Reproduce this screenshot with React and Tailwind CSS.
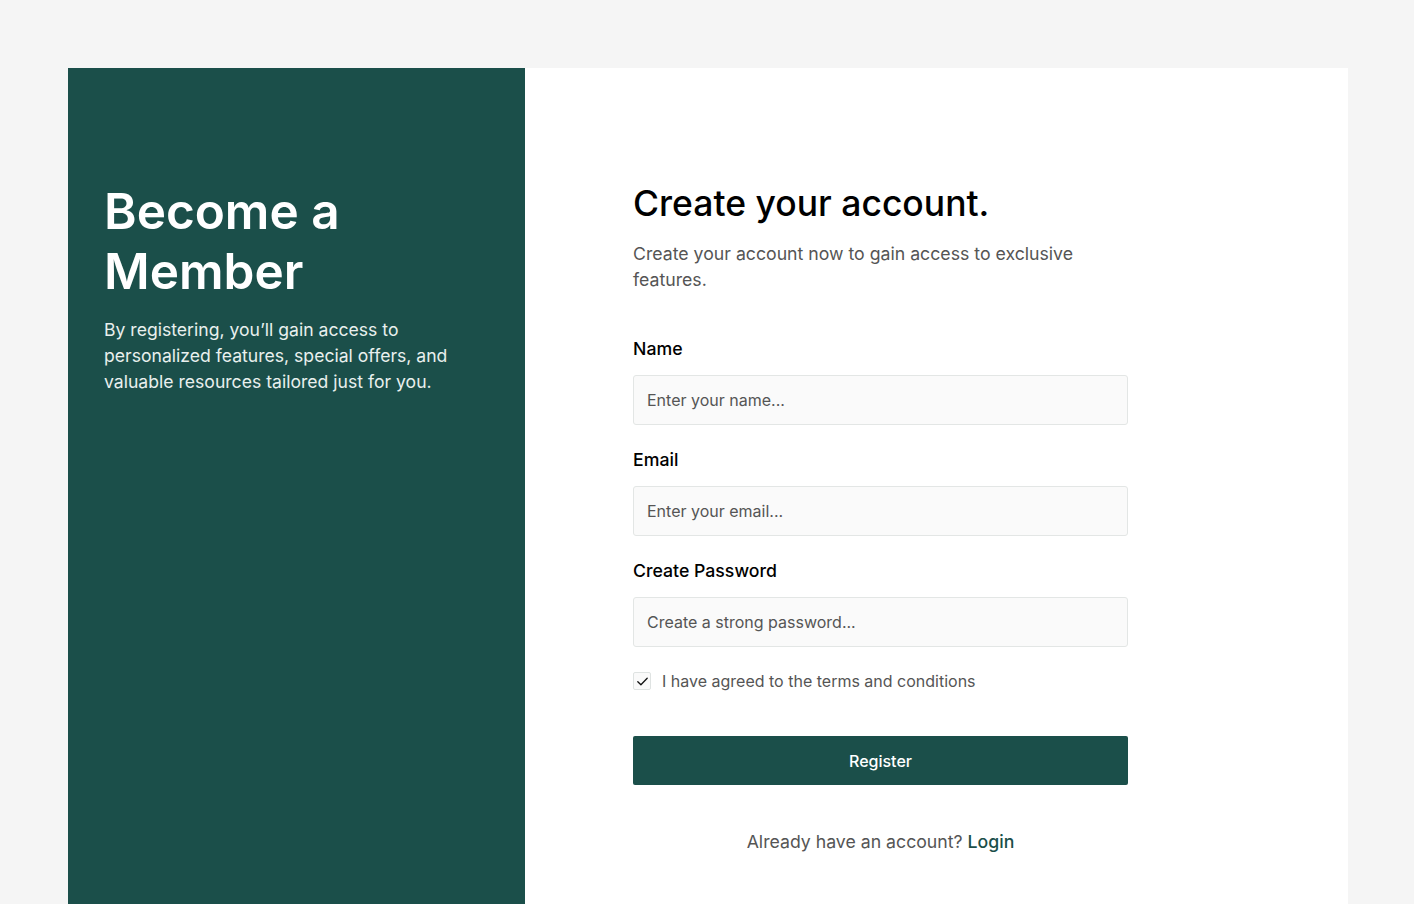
import React, { useState } from "react";

const font = { fontFamily: "Inter, 'Noto Sans', sans-serif" };

function Field({ label, type = "text", placeholder }) {
  return (
    <div className="flex flex-col gap-[14px]">
      <label className="text-[17.7px] leading-6 font-medium text-black">{label}</label>
      <input
        type={type}
        placeholder={placeholder}
        className="h-[50px] w-full rounded-[3px] border border-[#e3e6e5] bg-[#fafafa] px-[13px] text-[16px] text-[#222] placeholder:text-[#555] outline-none"
      />
    </div>
  );
}

export default function App() {
  const [agreed, setAgreed] = useState(true);

  return (
    <div className="min-h-screen bg-[#f5f5f5] pl-[68px] pr-[66px] pt-[68px]" style={font}>
      <div className="flex min-h-[836px]">
        {/* Left panel */}
        <div className="w-[457px] shrink-0 bg-[#1b4f4a] px-9 pt-[113px]">
          <h1 className="text-[49.5px] leading-[60px] font-semibold text-white">
            Become a Member
          </h1>
          <p className="mt-[16px] text-[17.6px] leading-[26px] text-[#e9f0ee] max-w-[360px]">
            By registering, you’ll gain access to personalized features, special offers, and
            valuable resources tailored just for you.
          </p>
        </div>

        {/* Right panel */}
        <div className="flex-1 bg-white pl-[108px] pt-[113px]">
          <div className="w-[495px]">
            <h2 className="text-[35.5px] leading-[46px] font-medium text-black">
              Create your account.
            </h2>
            <p className="mt-[14px] text-[17.7px] leading-[26px] text-[#555]">
              Create your account now to gain access to exclusive features.
            </p>

            <form className="mt-[44px] flex flex-col gap-[23px]" onSubmit={(e) => e.preventDefault()}>
              <Field label="Name" placeholder="Enter your name..." />
              <Field label="Email" type="email" placeholder="Enter your email..." />
              <Field label="Create Password" type="password" placeholder="Create a strong password..." />

              <label className="-mt-px flex items-center gap-[11px] cursor-pointer">
                <span
                  onClick={() => setAgreed(!agreed)}
                  className="flex h-[18px] w-[18px] items-center justify-center rounded-[2px] border border-[#dfe3e2] bg-[#fafafa]"
                >
                  {agreed && (
                    <svg viewBox="0 0 16 16" className="h-[15px] w-[15px]" fill="none" stroke="#111" strokeWidth="1.4" strokeLinecap="round" strokeLinejoin="round">
                      <path d="M3 8.3l3.3 3.2L13 4.6" />
                    </svg>
                  )}
                </span>
                <span className="text-[16px] leading-6 text-[#555]">I have agreed to the terms and conditions</span>
              </label>

              <button
                type="submit"
                className="mt-[20px] h-[49px] w-full rounded-[2px] bg-[#1b4f4a] text-[16px] font-medium text-white"
              >
                Register
              </button>
            </form>

            <p className="mt-[45px] text-center text-[17.7px] leading-6 text-[#555]">
              Already have an account?{" "}
              <a href="#" className="font-medium text-[#1b4f4a]">Login</a>
            </p>
          </div>
        </div>
      </div>
    </div>
  );
}
